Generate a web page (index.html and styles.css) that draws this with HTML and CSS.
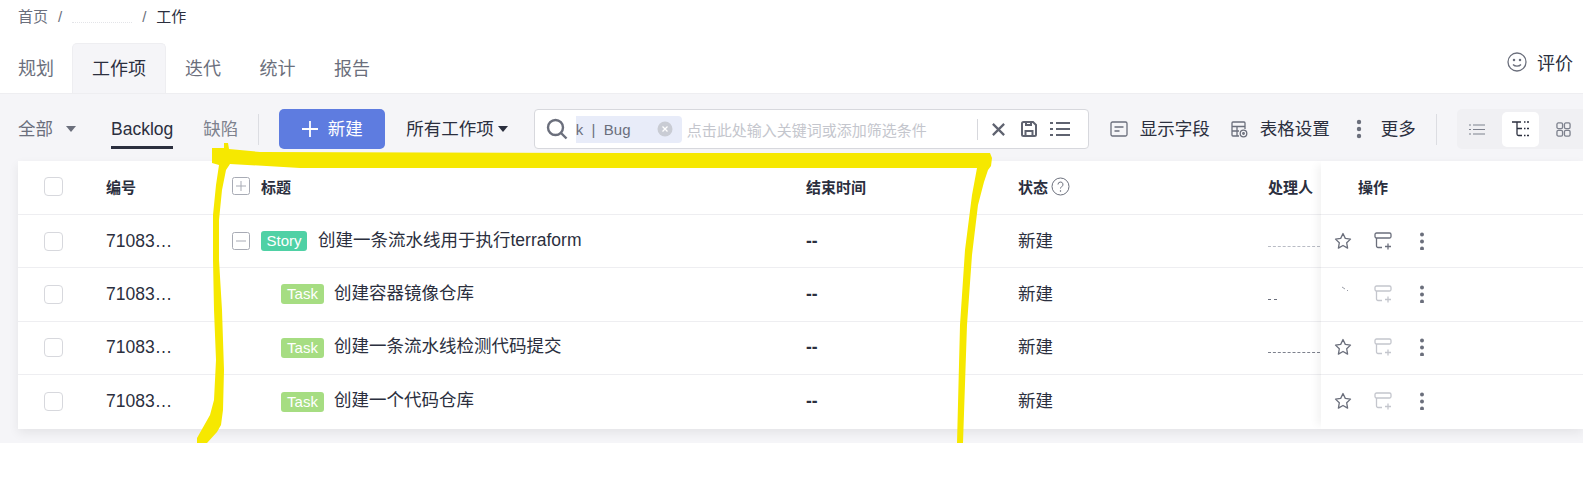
FILE: index.html
```html
<!DOCTYPE html>
<html lang="en">
<head>
    <meta charset="UTF-8">
    <title>工作项</title>
    <link rel="stylesheet" href="styles.css">
</head>
<body>
    <div class="breadcrumb">
        <span>首页</span><span class="sep">/</span><span class="smudge"></span><span class="sep">/</span><span class="current">工作</span>
    </div>

    <div class="tabs">
        <a class="tab">规划</a>
        <a class="tab active">工作项</a>
        <a class="tab">迭代</a>
        <a class="tab">统计</a>
        <a class="tab">报告</a>
        <div class="rate">
            <svg width="22" height="22" viewBox="0 0 22 22" fill="none" stroke="#6b6f7c" stroke-width="1.3"><circle cx="11" cy="11" r="9"/><path d="M7 13.5c2 2.200 6 2.200 8 0"/><circle cx="8" cy="9" r=".6"/><circle cx="14" cy="9" r=".6"/></svg>
            <span>评价</span>
        </div>
    </div>

    <div class="content">
        <div class="toolbar">
            <span class="all lift">全部</span><i class="caret grey"></i>
            <span class="filter-on">Backlog</span>
            <span class="filter lift">缺陷</span>
            <i class="divider first"></i>
            <button class="new-btn">
                <svg width="16" height="16" viewBox="0 0 16 16" stroke="#fff" stroke-width="1.800"><path d="M0 8h16M8 0v16"/></svg>
                <span class="lift">新建</span>
            </button>
            <span class="all-items lift">所有工作项</span><i class="caret"></i>

            <div class="search">
                <svg width="24" height="24" viewBox="0 0 24 24" fill="none" stroke="#6b6f7c" stroke-width="2.400"><circle cx="10.500" cy="10.500" r="7.500"/><path d="M16 16l5.500 5.500"/></svg>
                <div class="chip">
                    <span>k &nbsp;|&nbsp; Bug</span>
                    <svg width="16" height="16" viewBox="0 0 16 16"><circle cx="8" cy="8" r="7.500" fill="#c9ccd4"/><path d="M5.500 5.500l5 5M10.500 5.500l-5 5" stroke="#fff" stroke-width="1.300"/></svg>
                </div>
                <span class="placeholder">点击此处输入关键词或添加筛选条件</span>
                <i class="search-line"></i>
                <svg width="15" height="15" viewBox="0 0 16 16" stroke="#5f6370" stroke-width="2.400"><path d="M2 2l12 12M14 2L2 14"/></svg>
                <svg class="save" width="18" height="18" viewBox="0 0 18 18" fill="none" stroke="#5f6370" stroke-width="2"><path d="M2 3.500A1.500 1.500 0 0 1 3.500 2H13l3 3v9.500a1.500 1.500 0 0 1-1.500 1.500h-11A1.500 1.500 0 0 1 2 14.500z"/><path d="M5.500 16v-5h7v5M6 2v3h5V2"/></svg>
                <svg width="20" height="16" viewBox="0 0 20 16" stroke="#5f6370" stroke-width="2"><path d="M0 2h3M6 2h14M0 8h3M6 8h14M0 14h3M6 14h14"/></svg>
            </div>

            <div class="tool tool-fields">
                <svg width="18" height="16" viewBox="0 0 18 16" fill="none" stroke="#6b6f7c" stroke-width="1.300"><rect x="1" y="1" width="16" height="14" rx="1.500"/><path d="M4.500 6h9M4.500 10h5"/></svg>
                <span class="lift">显示字段</span>
            </div>
            <div class="tool tool-table">
                <svg width="17" height="17" viewBox="0 0 17 17" fill="none" stroke="#6b6f7c" stroke-width="1.300"><path d="M8 15H2a1 1 0 0 1-1-1V2a1 1 0 0 1 1-1h11a1 1 0 0 1 1 1v6M1 5.500h13M1 10h7M6 5.500V15"/><circle cx="12.500" cy="12.500" r="3.300"/><circle cx="12.500" cy="12.500" r=".8"/></svg>
                <span class="lift">表格设置</span>
            </div>
            <div class="tool tool-more">
                <svg width="6" height="20" viewBox="0 0 6 20" fill="#6b6f7c"><circle cx="3" cy="3" r="2.200"/><circle cx="3" cy="10" r="2.200"/><circle cx="3" cy="17" r="2.200"/></svg>
                <span class="lift">更多</span>
            </div>
            <i class="divider last"></i>
            <div class="views">
                <span class="view">
                    <svg width="16" height="11" viewBox="0 0 16 11" stroke="#7d818d" stroke-width="1.200"><path d="M0 1h2M4 1h12M0 5.500h2M4 5.500h12M0 10h2M4 10h12"/></svg>
                </span>
                <span class="view active">
                    <svg width="17" height="16" viewBox="0 0 17 16" fill="none" stroke="#2b2f3e" stroke-width="1.300"><path d="M0 1h9M5 1v12a1.500 1.500 0 0 0 1.500 1.500H10M5 7.500h5M12 1h1.500M15 1h2M12 7.500h1.500M15 7.500h2M12 14.500h1.500M15 14.500h2"/></svg>
                </span>
                <span class="view">
                    <svg width="15" height="15" viewBox="0 0 16 16" fill="none" stroke="#7d818d" stroke-width="1.400"><rect x="1" y="1" width="6" height="6" rx="1.500"/><rect x="9" y="1" width="6" height="6" rx="1.500"/><rect x="1" y="9" width="6" height="6" rx="1.500"/><rect x="9" y="9" width="6" height="6" rx="1.500"/></svg>
                </span>
            </div>
        </div>

        <div class="table">
            <div class="table-main">
                <div class="row head">
                    <span class="col-check"><i class="checkbox"></i></span>
                    <span class="col-id">编号</span>
                    <span class="col-title">
                        <svg class="tree-btn" width="18" height="18" viewBox="0 0 18 18" fill="none" stroke="#a8abb5"><rect x=".5" y=".5" width="17" height="17" rx="2"/><path d="M4 9h10M9 4v10"/></svg>
                        标题
                    </span>
                    <span class="col-end">结束时间</span>
                    <span class="col-status">状态
                        <svg width="19" height="19" viewBox="0 0 19 19" fill="none" stroke="#6b6f7c"><circle cx="9.500" cy="9.500" r="8.500"/><path d="M7 7.500a2.500 2.500 0 1 1 3.500 2.300c-.7.3-1 .8-1 1.700"/><circle cx="9.500" cy="14" r=".4"/></svg>
                    </span>
                    <span class="col-owner">处理人</span>
                </div>

                <div class="row">
                    <span class="col-check"><i class="checkbox"></i></span>
                    <span class="col-id">71083…</span>
                    <span class="col-title">
                        <svg class="tree-btn" width="18" height="18" viewBox="0 0 18 18" fill="none" stroke="#a8abb5"><rect x=".5" y=".5" width="17" height="17" rx="2"/><path d="M4 9h10"/></svg>
                        <span class="tag story">Story</span><span class="title-text">创建一条流水线用于执行terraform</span>
                    </span>
                    <span class="col-end dash">--</span>
                    <span class="col-status">新建</span>
                    <span class="col-owner"><i class="smudge-line"></i></span>
                </div>
                <div class="row">
                    <span class="col-check"><i class="checkbox"></i></span>
                    <span class="col-id">71083…</span>
                    <span class="col-title child"><span class="tag task">Task</span><span class="title-text">创建容器镜像仓库</span></span>
                    <span class="col-end dash">--</span>
                    <span class="col-status">新建</span>
                    <span class="col-owner"><i class="smudge-line short"></i></span>
                </div>
                <div class="row">
                    <span class="col-check"><i class="checkbox"></i></span>
                    <span class="col-id">71083…</span>
                    <span class="col-title child"><span class="tag task">Task</span><span class="title-text">创建一条流水线检测代码提交</span></span>
                    <span class="col-end dash">--</span>
                    <span class="col-status">新建</span>
                    <span class="col-owner"><i class="smudge-line dark"></i></span>
                </div>
                <div class="row last-row">
                    <span class="col-check"><i class="checkbox"></i></span>
                    <span class="col-id">71083…</span>
                    <span class="col-title child"><span class="tag task">Task</span><span class="title-text">创建一个代码仓库</span></span>
                    <span class="col-end dash">--</span>
                    <span class="col-status">新建</span>
                    <span class="col-owner"></span>
                </div>
            </div>

            <div class="table-ops">
                <div class="row head"><span class="ops-title">操作</span></div>
                <div class="row ops">
                    <svg class="star" width="18" height="18" viewBox="0 0 18 18" fill="none" stroke="#6b6f7c" stroke-width="1.300" stroke-linejoin="round"><path d="M9 1.500l2.300 4.900 5.200.7-3.800 3.700.9 5.300L9 13.500l-4.600 2.600.9-5.300L1.500 7.100l5.200-.7z"/></svg>
                    <svg class="sub" width="19" height="18" viewBox="0 0 19 18" fill="none" stroke="#6b6f7c" stroke-width="1.300"><rect x="1" y="1" width="16" height="5" rx="1.500"/><path d="M2.500 6v8a1.500 1.500 0 0 0 1.500 1.500h4M11 14.500h6M14 11.500v6"/></svg>
                    <svg width="6" height="18" viewBox="0 0 6 18" fill="#6b6f7c"><circle cx="3" cy="2.500" r="2"/><circle cx="3" cy="9.500" r="2"/><circle cx="3" cy="16.500" r="2"/></svg>
                </div>
                <div class="row ops">
                    <svg class="star" width="18" height="18" viewBox="0 0 18 18" fill="none" stroke="#9a9da7" stroke-width="1"><path d="M8 2l3 2M13 5l1 1"/></svg>
                    <svg class="sub" width="19" height="18" viewBox="0 0 19 18" fill="none" stroke="#c4c6cd" stroke-width="1.300"><rect x="1" y="1" width="16" height="5" rx="1.500"/><path d="M2.500 6v8a1.500 1.500 0 0 0 1.500 1.500h4M11 14.500h6M14 11.500v6"/></svg>
                    <svg width="6" height="18" viewBox="0 0 6 18" fill="#6b6f7c"><circle cx="3" cy="2.500" r="2"/><circle cx="3" cy="9.500" r="2"/><circle cx="3" cy="16.500" r="2"/></svg>
                </div>
                <div class="row ops">
                    <svg class="star" width="18" height="18" viewBox="0 0 18 18" fill="none" stroke="#6b6f7c" stroke-width="1.300" stroke-linejoin="round"><path d="M9 1.500l2.300 4.900 5.200.7-3.800 3.700.9 5.300L9 13.500l-4.600 2.600.9-5.300L1.500 7.100l5.200-.7z"/></svg>
                    <svg class="sub" width="19" height="18" viewBox="0 0 19 18" fill="none" stroke="#c4c6cd" stroke-width="1.300"><rect x="1" y="1" width="16" height="5" rx="1.500"/><path d="M2.500 6v8a1.500 1.500 0 0 0 1.500 1.500h4M11 14.500h6M14 11.500v6"/></svg>
                    <svg width="6" height="18" viewBox="0 0 6 18" fill="#6b6f7c"><circle cx="3" cy="2.500" r="2"/><circle cx="3" cy="9.500" r="2"/><circle cx="3" cy="16.500" r="2"/></svg>
                </div>
                <div class="row ops last-row">
                    <svg class="star" width="18" height="18" viewBox="0 0 18 18" fill="none" stroke="#6b6f7c" stroke-width="1.300" stroke-linejoin="round"><path d="M9 1.500l2.300 4.900 5.200.7-3.800 3.700.9 5.300L9 13.500l-4.600 2.600.9-5.300L1.500 7.100l5.200-.7z"/></svg>
                    <svg class="sub" width="19" height="18" viewBox="0 0 19 18" fill="none" stroke="#c4c6cd" stroke-width="1.300"><rect x="1" y="1" width="16" height="5" rx="1.500"/><path d="M2.500 6v8a1.500 1.500 0 0 0 1.500 1.500h4M11 14.500h6M14 11.500v6"/></svg>
                    <svg width="6" height="18" viewBox="0 0 6 18" fill="#6b6f7c"><circle cx="3" cy="2.500" r="2"/><circle cx="3" cy="9.500" r="2"/><circle cx="3" cy="16.500" r="2"/></svg>
                </div>
            </div>
        </div>
    </div>

    <!-- yellow marker drawn on top of the screenshot -->
    <svg class="marker" width="1583" height="443" viewBox="0 0 1583 443" fill="#f6e800">
        <path d="M224 143L228 143L229 149L260 152L600 153L990 153L992 158L991 166L988 170L984 182L978 205L972 255L967 325L963 443L957 443L960 325L965 250L972 195L977 168L700 168L300 168L230 164L226 170L222 190L219 220L219 260L222 310L224 370L223 410L221 425L217 432L207 443L197 443L197 438L210 415L214 400L216 360L214 310L213 260L213 215L216 185L219 165L212 163L212 148L224 148Z"/>
    </svg>
</body>
</html>
```

FILE: styles.css
```css
* {
    box-sizing: border-box;
    margin: 0;
    padding: 0;
}

body {
    width: 1583px;
    height: 483px;
    overflow: hidden;
    background-color: #fff;
    color: #2b2f3e;
    font-family: "Liberation Sans", "Noto Sans CJK SC", sans-serif;
    font-size: 17.5px;
    position: relative;
}

i {
    display: inline-block;
    flex: none;
}

/* Breadcrumb */
.breadcrumb {
    height: 43px;
    padding: 8px 0 0 18px;
    display: flex;
    align-items: flex-start;
    font-size: 15px;
    line-height: 18px;
    color: #6b6f7c;
}

.breadcrumb .sep {
    margin: 0 10px;
}

.breadcrumb .current {
    color: #2b2f3e;
}

.smudge {
    width: 60px;
    height: 10px;
    margin-top: 5px;
    border-bottom: 1px dotted #e3e4e8;
}

/* Tabs */
.tabs {
    height: 50px;
    display: flex;
    align-items: stretch;
    padding-left: 18px;
    font-size: 18px;
    color: #6b6f7c;
}

.tab {
    display: flex;
    align-items: center;
    padding-bottom: 3px;
    margin-right: 38.5px;
    white-space: nowrap;
}

.tab:first-child {
    margin-right: 18px;
}

.tab.active {
    margin-right: 19px;
    width: 94px;
    padding: 0 19px 3px;
    color: #2b2f3e;
    background-color: #f5f5f8;
    border: 1px solid #eeeef1;
    border-bottom: none;
    border-radius: 5px 5px 0 0;
}

.rate {
    margin-left: auto;
    margin-right: 10px;
    padding-bottom: 12px;
    display: flex;
    align-items: center;
    gap: 9px;
    color: #2b2f3e;
}

/* Toolbar */
.content {
    height: 350px;
    background-color: #f5f5f8;
    border-top: 1px solid #eeeef1;
}

.toolbar {
    height: 67px;
    padding: 3px 0 0 18px;
    display: flex;
    align-items: center;
    white-space: nowrap;
    color: #2b2f3e;
}

.toolbar > * {
    flex: none;
}

/* Noto CJK sits lower than the Latin text next to it */
.lift {
    padding-bottom: 3px;
}

.all {
    color: #6b6f7c;
}

.caret {
    width: 0;
    height: 0;
    border-left: 5px solid transparent;
    border-right: 5px solid transparent;
    border-top: 6px solid #2b2f3e;
    margin-left: 4px;
}

.caret.grey {
    border-top-color: #6b6f7c;
    margin-left: 13px;
}

.filter-on {
    margin-left: 35px;
    height: 40px;
    line-height: 40px;
    border-bottom: 3px solid #2b2f3e;
}

.filter {
    margin-left: 30px;
    color: #7d818d;
}

.divider {
    width: 1px;
    height: 31px;
    background-color: #dcdde2;
}

.divider.first {
    margin: 0 20px;
}

.new-btn {
    width: 106px;
    height: 40px;
    display: flex;
    align-items: center;
    justify-content: center;
    gap: 10px;
    border: none;
    border-radius: 5px;
    background-color: #5e7ce0;
    color: #fff;
    font: inherit;
}

.all-items {
    margin-left: 21px;
}

/* Search box */
.search {
    width: 555px;
    height: 40px;
    margin-left: 26px;
    padding-left: 10px;
    display: flex;
    align-items: center;
    background-color: #fff;
    border: 1px solid #d7d8dd;
    border-radius: 4px;
}

.search svg {
    flex: none;
}

.chip {
    width: 106px;
    height: 27px;
    margin-left: 7px;
    padding: 0 9px 0 0;
    display: flex;
    align-items: center;
    justify-content: space-between;
    background-color: #e8ecf9;
    border-radius: 0 4px 4px 0;
    color: #6b6f7c;
    font-size: 15px;
}

.placeholder {
    margin-left: 5px;
    width: 290px;
    font-size: 15px;
    color: #c4c6cd;
}

.search-line {
    width: 1px;
    height: 21px;
    background-color: #d7d8dd;
    margin-right: 13px;
}

.search .save {
    margin: 0 12px 0 14px;
}

/* Right side tools */
.tool {
    display: flex;
    align-items: center;
    gap: 12px;
}

.tool-fields {
    margin-left: 21px;
}

.tool-table {
    margin-left: 21px;
}

.tool-more {
    margin-left: 26px;
}

.tool-more svg {
    margin-right: 7px;
}

.divider.last {
    margin: 0 20px 0 20px;
}

.views {
    flex: 1;
    height: 40px;
    display: flex;
    align-items: center;
    padding-left: 2px;
    background-color: #f0f0f3;
    border-radius: 5px 0 0 5px;
}

.view {
    width: 37px;
    height: 35px;
    display: flex;
    align-items: center;
    justify-content: center;
    margin-right: 6px;
}

.view.active {
    background-color: #fff;
    border-radius: 5px;
}

/* Table */
.table {
    margin-left: 18px;
    height: 268px;
    display: flex;
    background-color: #fff;
    box-shadow: 0 4px 10px rgba(0, 0, 0, 0.07);
}

.table-main {
    width: 1303px;
    overflow: hidden;
}

.table-ops {
    flex: 1;
    box-shadow: -8px 0 8px -4px rgba(0, 0, 0, 0.05);
    position: relative;
}

.row {
    height: 53.25px;
    display: flex;
    align-items: center;
    border-bottom: 1px solid #eeeef1;
}

.row.head {
    height: 54px;
    padding-bottom: 3px;
    font-size: 15px;
    font-weight: 700;
}

.row.last-row {
    height: 54px;
    border-bottom: none;
}

.col-check {
    width: 88px;
    padding-left: 26px;
    display: flex;
    align-items: center;
}

.checkbox {
    width: 19px;
    height: 19px;
    border: 1px solid #d7d8dd;
    border-radius: 4px;
    background-color: #fff;
}

.col-id {
    width: 126px;
}

.col-title {
    width: 574px;
    display: flex;
    align-items: center;
    white-space: nowrap;
    color: #2b2f3e;
}

.col-title.child {
    padding-left: 49px;
}

.title-text {
    padding-bottom: 6px;
}

.tree-btn {
    margin-right: 11px;
}

.tag {
    width: 46px;
    height: 20px;
    margin-right: 11px;
    border-radius: 3px;
    color: #fff;
    font-size: 15px;
    line-height: 20px;
    text-align: center;
}

.tag.story {
    background-color: #4fd1a5;
}

.tag.task {
    width: 43px;
    margin-right: 10px;
    background-color: #a6dd82;
}

.col-end {
    width: 212px;
}

.col-end.dash {
    font-weight: 700;
}

.col-status {
    width: 250px;
    display: flex;
    align-items: center;
    gap: 3px;
}

.row:not(.head) .col-status {
    padding-bottom: 4px;
}

.col-owner {
    flex: 1;
    white-space: nowrap;
}

.smudge-line {
    width: 52px;
    border-bottom: 1px dashed #b9bcc5;
    vertical-align: middle;
    margin-top: 8px;
}

.smudge-line.dark {
    border-color: #7d818d;
}

.smudge-line.short {
    width: 9px;
    border-color: #6b6f7c;
}

.ops-title {
    margin-left: 37px;
}

.ops {
    padding: 0 0 1px 13px;
}

.ops svg {
    flex: none;
}

.ops .sub {
    margin-left: 22px;
    margin-right: 26px;
}

.marker {
    position: absolute;
    left: 0;
    top: 0;
    pointer-events: none;
}
```
